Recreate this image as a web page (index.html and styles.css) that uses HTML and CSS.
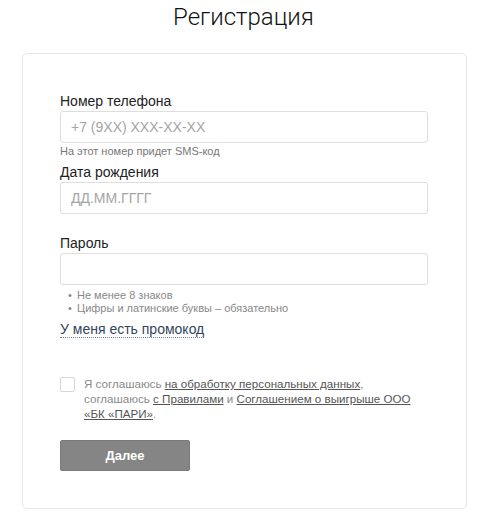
FILE: index.html
```html
<!DOCTYPE html>
<html lang="ru">
<head>
    <meta charset="UTF-8">
    <meta name="viewport" content="width=device-width, initial-scale=1.0">
    <title>Регистрация</title>
    <link rel="stylesheet" href="styles.css">
</head>
<body>
    <h1 class="page-title">Регистрация</h1>
    <div class="card">
        <form class="reg-form">
            <div class="field">
                <label for="phone">Номер телефона</label>
                <input type="text" id="phone" placeholder="+7 (9XX) XXX-XX-XX">
                <div class="note">На этот номер придет SMS-код</div>
            </div>
            <div class="field">
                <label for="birth">Дата рождения</label>
                <input type="text" id="birth" placeholder="ДД.ММ.ГГГГ">
                <div class="note"></div>
            </div>
            <div class="field">
                <label for="password">Пароль</label>
                <input type="password" id="password">
                <ul class="rules">
                    <li>Не менее 8 знаков</li>
                    <li>Цифры и латинские буквы – обязательно</li>
                </ul>
            </div>
            <a class="promo" href="#">У меня есть промокод</a>
            <div class="agree">
                <input type="checkbox" id="agree">
                <label for="agree">
                    <span class="line">Я соглашаюсь <a href="#">на обработку персональных данных</a>,</span>
                    <span class="line">соглашаюсь <a href="#">с Правилами</a> и <a href="#">Соглашением о выигрыше ООО</a></span>
                    <span class="line"><a href="#">«БК «ПАРИ»</a>.</span>
                </label>
            </div>
            <button type="submit" class="next-btn">Далее</button>
        </form>
    </div>
</body>
</html>
```

FILE: styles.css
```css
body {
    font-family: "Liberation Sans", Arial, sans-serif;
    background: #fff;
    color: #222;
    margin: 0;
    padding: 0;
}

.page-title {
    font-family: Roboto, "Liberation Sans", sans-serif;
    font-weight: 300;
    font-size: 24px;
    line-height: 28px;
    text-align: center;
    color: #111;
    margin: 3px 0 0 8px;
}

.card {
    width: 445px;
    margin: 22px 0 0 22px;
    border: 1px solid #e6e6e6;
    border-radius: 5px;
    padding: 39px 38px 37px 37px;
    box-sizing: border-box;
}

.reg-form {
    display: flex;
    flex-direction: column;
    align-items: flex-start;
}

.field {
    width: 100%;
}

.field label {
    display: block;
    font-size: 14px;
    line-height: 16px;
    color: #222;
    margin-bottom: 2px;
}

.field input {
    display: block;
    width: 100%;
    height: 32px;
    box-sizing: border-box;
    border: 1px solid #dedede;
    border-radius: 3px;
    padding: 0 10px;
    font-family: inherit;
    font-size: 14px;
    color: #222;
    outline: none;
}

.field input::placeholder {
    color: #a5a5a5;
}

.note {
    min-height: 19px;
    padding-top: 2px;
    font-size: 11px;
    line-height: 13px;
    color: #777;
}

.rules {
    list-style: none;
    margin: 0;
    padding: 4px 0 0 8px;
    font-size: 11px;
    line-height: 13px;
    color: #888;
}

.rules li:before {
    content: '•';
    display: inline-block;
    width: 9px;
    color: #888;
}

.promo {
    margin-top: 6px;
    font-size: 14px;
    line-height: 16px;
    color: #34455a;
    text-decoration: none;
    border-bottom: 1px dotted #6b7f99;
}

.agree {
    display: flex;
    align-items: flex-start;
    margin-top: 38px;
    width: 100%;
}

.agree input[type="checkbox"] {
    appearance: none;
    -webkit-appearance: none;
    flex: none;
    width: 15px;
    height: 15px;
    margin: 1px 9px 0 0;
    border: 1px solid #d6d6d6;
    border-radius: 2px;
    background: #fff;
}

.agree label {
    font-size: 11.6px;
    line-height: 15px;
    color: #8a8a8a;
}

.agree .line {
    display: block;
    white-space: nowrap;
}

.agree label a {
    color: #555;
    text-decoration: underline;
}

.next-btn {
    margin-top: 19px;
    width: 130px;
    height: 31px;
    background-color: #858585;
    border: 1px solid #7a7a7a;
    border-radius: 2px;
    color: #fff;
    font-family: inherit;
    font-size: 13px;
    font-weight: bold;
    cursor: pointer;
}
```
